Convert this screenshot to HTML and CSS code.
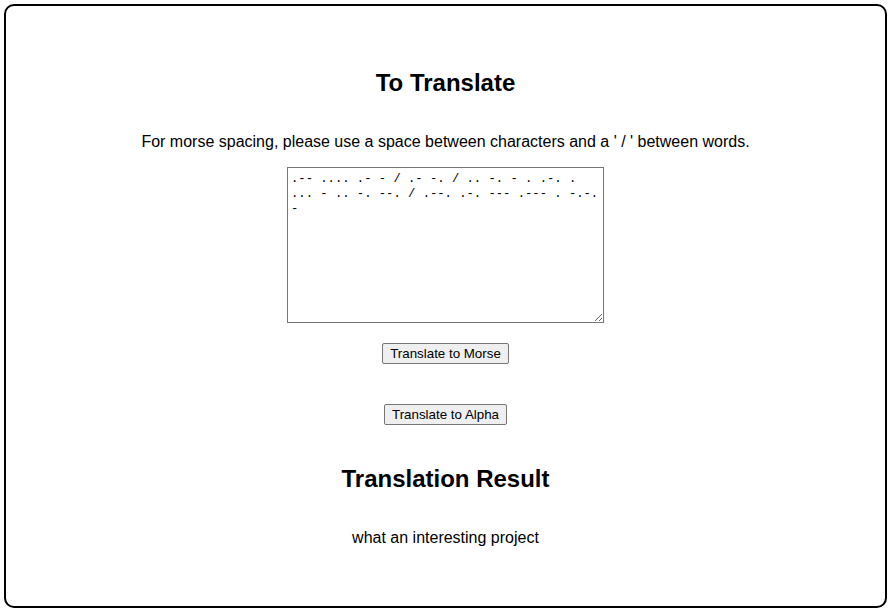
FILE: index.html
```html
<!DOCTYPE html>
<html>
<head>
<meta charset="utf-8">
<link rel="stylesheet" href="styles.css">
</head>
<body>
<main class="card">
  <h2 class="title">To Translate</h2>
  <p class="hint">For morse spacing, please use a space between characters and a ' / ' between words.</p>
  <textarea class="input">.-- .... .- - / .- -. / .. -. - . .-. . ... - .. -. --. / .--. .-. --- .--- . -.-. -</textarea>
  <button class="btn btn-morse">Translate to Morse</button>
  <button class="btn btn-alpha">Translate to Alpha</button>
  <h2 class="title result-title">Translation Result</h2>
  <p class="result">what an interesting project</p>
</main>
</body>
</html>
```
FILE: styles.css
```css
html, body {
  margin: 0;
  padding: 0;
  background: #ffffff;
}
body {
  font-family: "Liberation Sans", Arial, sans-serif;
  color: #000;
}
.card {
  box-sizing: border-box;
  margin: 4px;
  width: 883px;
  height: 604px;
  border: 2px solid #000;
  border-radius: 10px;
  display: flex;
  flex-direction: column;
  align-items: center;
}
.title {
  margin: 63px 0 0;
  font-size: 24px;
  line-height: 28px;
  font-weight: bold;
}
.hint {
  margin: 36px 0 0;
  font-size: 16px;
  line-height: 18px;
}
.input {
  box-sizing: border-box;
  margin: 16px 0 0;
  width: 317px;
  height: 156px;
  padding: 4px 2px 2px 3px;
  border: 1px solid #767676;
  border-radius: 0;
  font-family: "Liberation Mono", "Courier New", monospace;
  font-size: 12.2px;
  line-height: 15px;
  color: #000;
  resize: both;
}
.btn {
  box-sizing: border-box;
  height: 21px;
  padding: 1px 6px;
  border: 1px solid #767676;
  border-radius: 2px;
  background: #efefef;
  font-family: "Liberation Sans", Arial, sans-serif;
  font-size: 13.33px;
  line-height: 15px;
  color: #000;
}
.btn-morse {
  margin: 20px 0 0;
  width: 127px;
}
.btn-alpha {
  margin: 40px 0 0;
  width: 123px;
}
.result-title {
  margin-top: 40px;
}
.result {
  margin: 36px 0 0;
  font-size: 16px;
  line-height: 18px;
}
```
